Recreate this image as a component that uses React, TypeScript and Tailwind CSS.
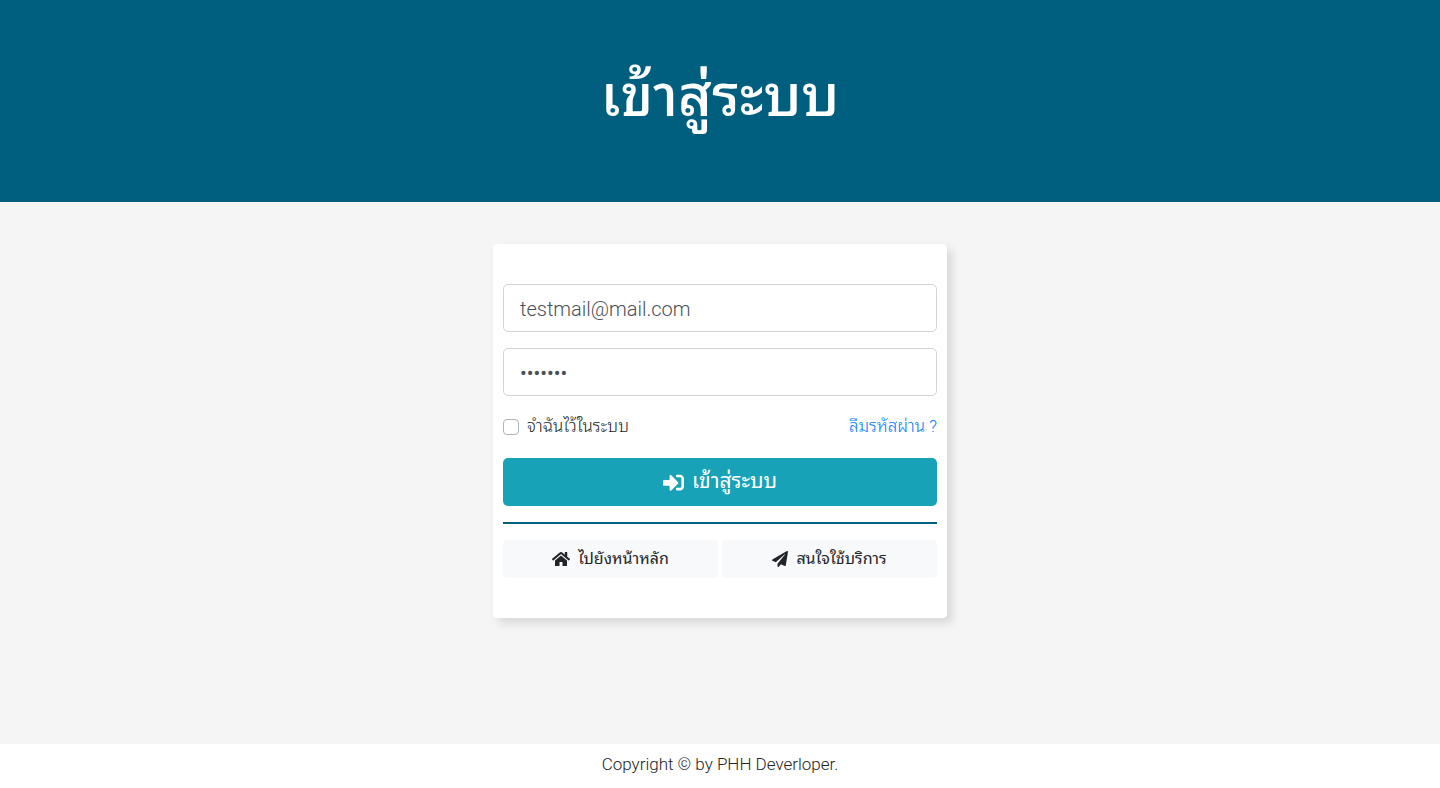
import { FaHome, FaPaperPlane, FaSignInAlt } from "react-icons/fa"

const PAGE_FONT = "font-['Roboto','Noto_Sans_Thai_Looped','Noto_Sans_Thai','Noto_Sans',sans-serif]"

const FIELD =
  "block h-12 w-full rounded-[5px] border border-[#ced4da] bg-white px-4 pt-0.5 text-xl text-[#495057]"

const LINK_BUTTON =
  "flex h-[38px] flex-1 items-center justify-center gap-2 rounded bg-[#f8f9fa] text-base"

export default function App() {
  return (
    <div className={`flex min-h-screen flex-col bg-[#f5f5f5] text-[#212529] ${PAGE_FONT}`}>
      {/* Page heading */}
      <header className="flex h-[202px] justify-center bg-[#005f7f] pt-[54px]">
        <h1 className="text-[58px] leading-[84px] font-medium text-white">เข้าสู่ระบบ</h1>
      </header>

      {/* Login card */}
      <main className="flex flex-1 flex-col items-center px-4 pt-[42px] pb-12">
        <div className="w-full max-w-[454px] rounded bg-white px-2.5 py-10 shadow-[5px_5px_10px_rgba(0,0,0,0.12)]">
          <form onSubmit={(e) => e.preventDefault()}>
            <div className="flex flex-col gap-4">
              <input
                type="email"
                aria-label="อีเมล"
                defaultValue="testmail@mail.com"
                className={`${FIELD} font-light`}
              />
              <input type="password" aria-label="รหัสผ่าน" defaultValue="1234567" className={FIELD} />
            </div>
            <div className="my-[19px] flex h-6 items-center justify-between text-[17px] font-light">
              <label className="flex items-center gap-2">
                <input
                  type="checkbox"
                  className="size-4 appearance-none rounded border border-[#adb5bd] bg-white checked:bg-[#007bff]"
                />
                จำฉันไว้ในระบบ
              </label>
              <a href="#forgot" className="text-[#007bff]">ลืมรหัสผ่าน ?</a>
            </div>
            <button
              type="submit"
              className="flex h-12 w-full items-center justify-center gap-2 rounded-[5px] bg-[#17a2b8] text-[21px] text-white"
            >
              <FaSignInAlt />
              เข้าสู่ระบบ
            </button>
          </form>

          <hr className="my-4 border-t-2 border-[#005f7f]" />

          <div className="flex gap-1">
            <a href="#home" className={LINK_BUTTON}>
              <FaHome className="size-[18px]" />
              ไปยังหน้าหลัก
            </a>
            <a href="#service" className={LINK_BUTTON}>
              <FaPaperPlane className="size-4" />
              สนใจใช้บริการ
            </a>
          </div>
        </div>
      </main>

      <footer className="h-[44px] bg-white pt-2 text-center text-[17px] leading-6 font-light">
        Copyright © by PHH Deverloper.
      </footer>
    </div>
  )
}
